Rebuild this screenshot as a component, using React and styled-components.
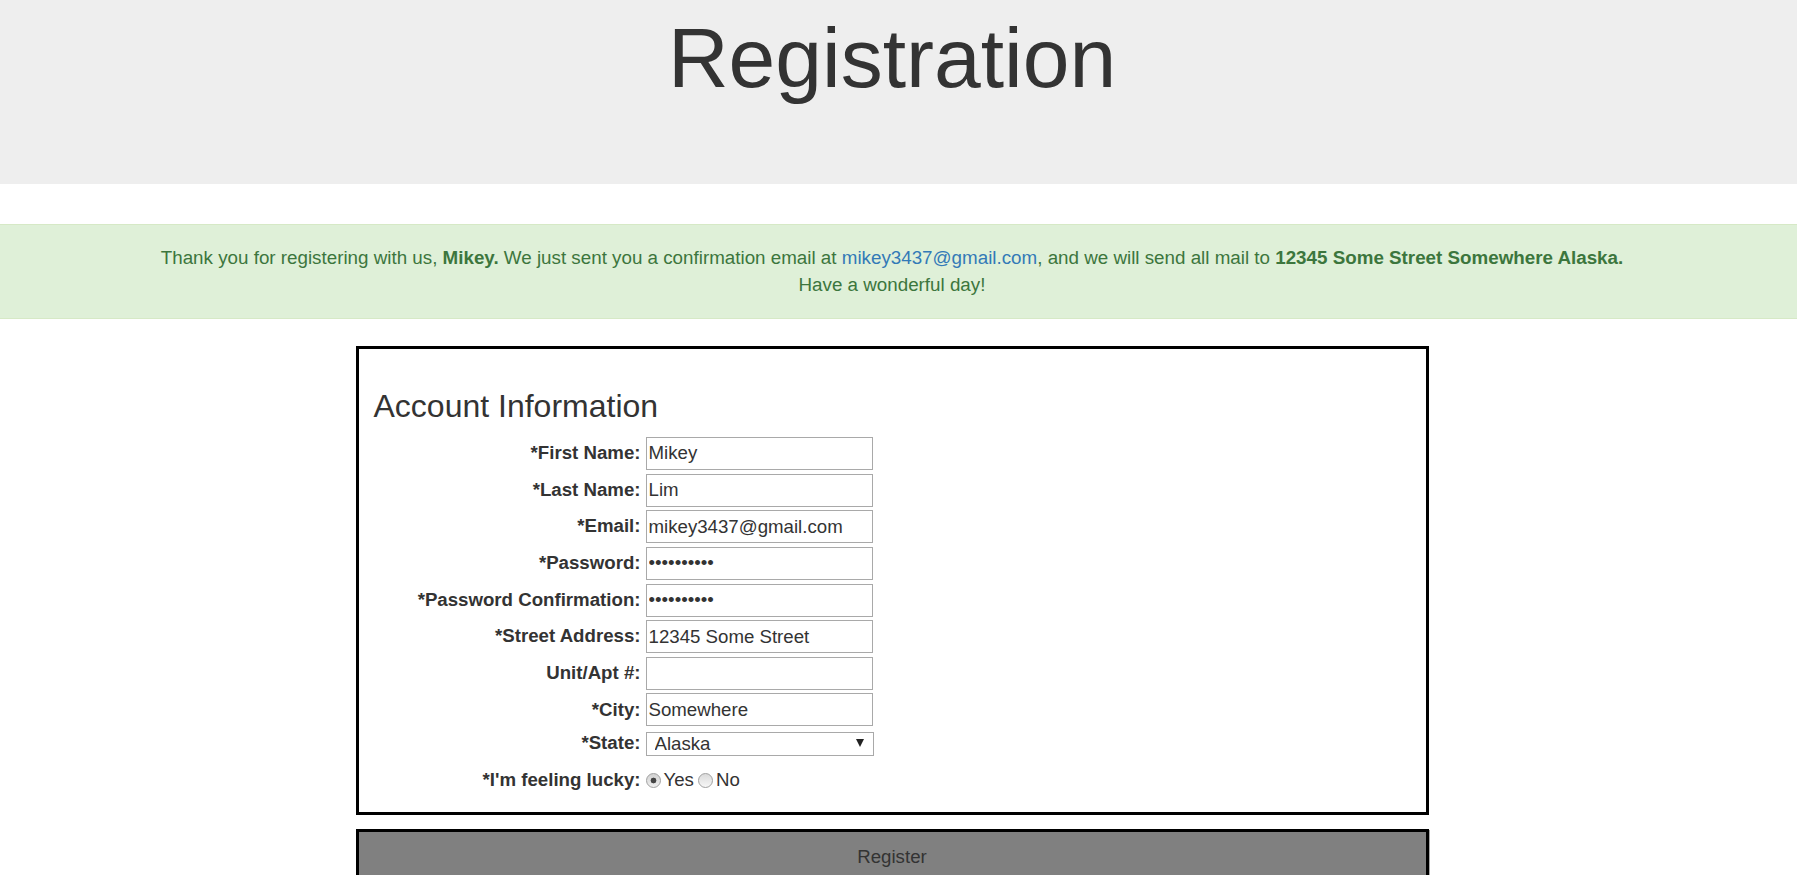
import React from "react";
import styled, { createGlobalStyle } from "styled-components";

const fields = [
  { label: "*First Name:", value: "Mikey" },
  { label: "*Last Name:", value: "Lim" },
  { label: "*Email:", value: "mikey3437@gmail.com" },
  { label: "*Password:", value: "mikeylim12", type: "password" },
  { label: "*Password Confirmation:", value: "mikeylim12", type: "password" },
  { label: "*Street Address:", value: "12345 Some Street" },
  { label: "Unit/Apt #:", value: "" },
  { label: "*City:", value: "Somewhere" },
];

const App = () => {
  return (
    <>
      <GlobalStyle />
      <Jumbotron>
        <Title>Registration</Title>
      </Jumbotron>
      <Alert>
        Thank you for registering with us, <b>Mikey.</b> We just sent you a confirmation email at{" "}
        <MailLink href="#">mikey3437@gmail.com</MailLink>, and we will send all mail to{" "}
        <b>12345 Some Street Somewhere Alaska.</b>
        <br />
        Have a wonderful day!
      </Alert>
      <Main>
        <FormBox>
          <SectionTitle>Account Information</SectionTitle>
          <FieldGrid>
            {fields.map((f) => (
              <React.Fragment key={f.label}>
                <FieldLabel>{f.label}</FieldLabel>
                <TextInput type={f.type || "text"} defaultValue={f.value} />
              </React.Fragment>
            ))}
            <FieldLabel>*State:</FieldLabel>
            <SelectWrap>
              <Select defaultValue="Alaska">
                <option>Alabama</option>
                <option>Alaska</option>
                <option>Arizona</option>
              </Select>
            </SelectWrap>
            <FieldLabel>*I'm feeling lucky:</FieldLabel>
            <RadioGroup>
              <RadioLabel>
                <Radio type="radio" name="lucky" defaultChecked />
                Yes
              </RadioLabel>
              <RadioLabel>
                <Radio type="radio" name="lucky" />
                No
              </RadioLabel>
            </RadioGroup>
          </FieldGrid>
        </FormBox>
        <RegisterButton type="button">Register</RegisterButton>
      </Main>
    </>
  );
};

export default App;

const GlobalStyle = createGlobalStyle`
  *, *::before, *::after {
    box-sizing: border-box;
  }
  html, body {
    margin: 0;
    padding: 0;
    overflow: hidden;
    background: #fff;
  }
  body {
    font-family: "Liberation Sans", Arial, Helvetica, sans-serif;
    font-size: 18.67px;
    line-height: 1.42857;
    color: #333;
  }
`;

const Jumbotron = styled.div`
  height: 184px;
  padding: 12px 13px 0 0;
  background: #eee;
  margin-bottom: 40px;
`;

const Title = styled.h1`
  margin: 0;
  font-size: 84px;
  font-weight: 400;
  line-height: 1.1;
  color: #333;
  text-align: center;
`;

const Alert = styled.div`
  padding: 20px 33px 19px 20px;
  background: #dff0d8;
  border-top: 1px solid #d6e9c6;
  border-bottom: 1px solid #d6e9c6;
  color: #3c763d;
  font-size: 18.8px;
  text-align: center;
  margin-bottom: 27.5px;

  b {
    font-weight: 700;
  }
`;

const MailLink = styled.a`
  color: #337ab7;
  text-decoration: none;
`;

const Main = styled.div`
  padding-right: 13px;
`;

const FormBox = styled.div`
  width: 1073px;
  margin: 0 auto;
  border: 3px solid #000;
  padding: 0 12px 11.5px 15px;
`;

const SectionTitle = styled.h3`
  margin: 40px 0 12.5px;
  font-size: 32px;
  font-weight: 400;
  line-height: 1.1;
  color: #333;
`;

const FieldGrid = styled.div`
  display: grid;
  grid-template-columns: 267px 227px;
  column-gap: 5px;
  row-gap: 3.67px;
  align-items: center;
`;

const FieldLabel = styled.label`
  font-weight: 700;
  text-align: right;
  white-space: nowrap;
  color: #333;
`;

const TextInput = styled.input`
  width: 227px;
  height: 33px;
  margin: 0;
  padding: 0 2px;
  border: 1px solid #a9a9a9;
  font-family: inherit;
  font-size: 18.67px;
  color: #333;
  background: #fff;
  outline: none;
`;

const SelectWrap = styled.div`
  position: relative;
  width: 228px;
  height: 24px;

  &::after {
    content: "";
    position: absolute;
    right: 10px;
    top: 8px;
    border-left: 4.5px solid transparent;
    border-right: 4.5px solid transparent;
    border-top: 8px solid #222;
    pointer-events: none;
  }
`;

const Select = styled.select`
  appearance: none;
  width: 100%;
  height: 24px;
  margin: 0;
  padding: 0 24px 0 8px;
  border: 1px solid #a9a9a9;
  border-radius: 0;
  background: #fff;
  font-family: inherit;
  font-size: 18.67px;
  line-height: 22px;
  color: #333;
  outline: none;
`;

const RadioGroup = styled.div`
  display: flex;
  align-items: center;
  height: 40px;
`;

const RadioLabel = styled.label`
  display: inline-flex;
  align-items: center;
  color: #333;
  cursor: pointer;
`;

const Radio = styled.input`
  appearance: none;
  width: 15px;
  height: 15px;
  margin: 0 3px 0 4px;
  border: 1px solid #a0a0a0;
  border-radius: 50%;
  background: linear-gradient(#dadada, #f7f7f7);
  ${RadioLabel}:first-child & {
    margin-left: 0;
  }

  &:checked {
    background: radial-gradient(circle, #444 0 2.6px, transparent 3.2px),
      linear-gradient(#d2d2d2, #eeeeee);
  }
`;

const RegisterButton = styled.button`
  display: block;
  width: 1073px;
  margin: 14px auto 0;
  padding: 12px 12px 10px;
  border: 3px solid #000;
  background: #808080;
  box-shadow: 1px 1px 0 #a8a8a8;
  font-family: inherit;
  font-size: 18.67px;
  line-height: 1.42857;
  color: #333;
  text-align: center;
`;
